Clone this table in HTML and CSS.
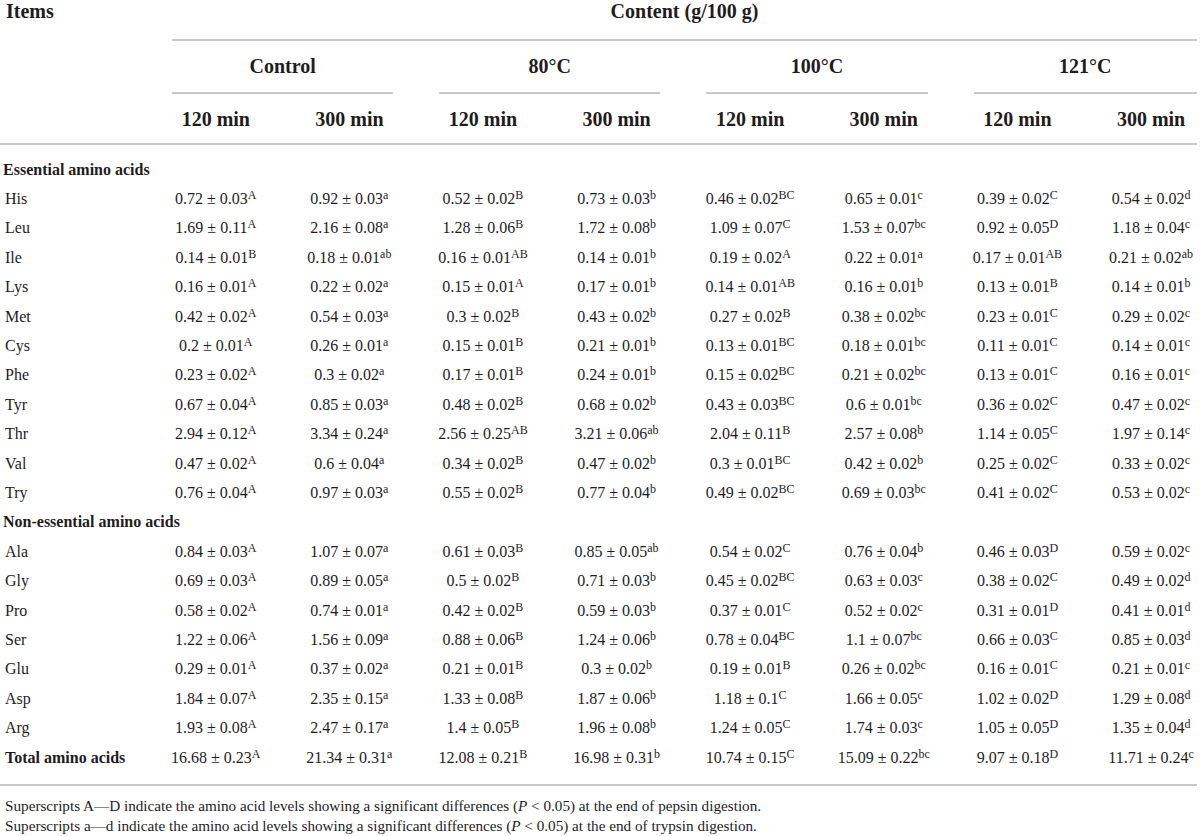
FILE: index.html
```html
<!DOCTYPE html>
<html lang="en">
<head>
<meta charset="utf-8">
<title>Amino acid content</title>
<link rel="stylesheet" href="styles.css">
</head>
<body>
<table class="tbl">
  <colgroup>
    <col class="c-items">
    <col class="c-data"><col class="c-data"><col class="c-data"><col class="c-data">
    <col class="c-data"><col class="c-data"><col class="c-data"><col class="c-last">
  </colgroup>
  <thead>
    <tr>
      <th class="h-items" rowspan="3">Items</th>
      <th class="h-content" colspan="8"><div class="h-content-in">Content (g/100 g)</div></th>
    </tr>
    <tr>
      <th class="h-grp" colspan="2"><div class="grp-in">Control</div></th>
      <th class="h-grp" colspan="2"><div class="grp-in">80°C</div></th>
      <th class="h-grp" colspan="2"><div class="grp-in">100°C</div></th>
      <th class="h-grp" colspan="2"><div class="grp-in grp-last">121°C</div></th>
    </tr>
    <tr class="h-sub">
      <th>120 min</th><th>300 min</th>
      <th>120 min</th><th>300 min</th>
      <th>120 min</th><th>300 min</th>
      <th>120 min</th><th class="last">300 min</th>
    </tr>
  </thead>
  <tbody>
    <tr class="sec first"><td colspan="9">Essential amino acids</td></tr>
    <tr><td class="lbl">His</td><td>0.72 ± 0.03<sup>A</sup></td><td>0.92 ± 0.03<sup>a</sup></td><td>0.52 ± 0.02<sup>B</sup></td><td>0.73 ± 0.03<sup>b</sup></td><td>0.46 ± 0.02<sup>BC</sup></td><td>0.65 ± 0.01<sup>c</sup></td><td>0.39 ± 0.02<sup>C</sup></td><td class="last">0.54 ± 0.02<sup>d</sup></td></tr>
    <tr><td class="lbl">Leu</td><td>1.69 ± 0.11<sup>A</sup></td><td>2.16 ± 0.08<sup>a</sup></td><td>1.28 ± 0.06<sup>B</sup></td><td>1.72 ± 0.08<sup>b</sup></td><td>1.09 ± 0.07<sup>C</sup></td><td>1.53 ± 0.07<sup>bc</sup></td><td>0.92 ± 0.05<sup>D</sup></td><td class="last">1.18 ± 0.04<sup>c</sup></td></tr>
    <tr><td class="lbl">Ile</td><td>0.14 ± 0.01<sup>B</sup></td><td>0.18 ± 0.01<sup>ab</sup></td><td>0.16 ± 0.01<sup>AB</sup></td><td>0.14 ± 0.01<sup>b</sup></td><td>0.19 ± 0.02<sup>A</sup></td><td>0.22 ± 0.01<sup>a</sup></td><td>0.17 ± 0.01<sup>AB</sup></td><td class="last">0.21 ± 0.02<sup>ab</sup></td></tr>
    <tr><td class="lbl">Lys</td><td>0.16 ± 0.01<sup>A</sup></td><td>0.22 ± 0.02<sup>a</sup></td><td>0.15 ± 0.01<sup>A</sup></td><td>0.17 ± 0.01<sup>b</sup></td><td>0.14 ± 0.01<sup>AB</sup></td><td>0.16 ± 0.01<sup>b</sup></td><td>0.13 ± 0.01<sup>B</sup></td><td class="last">0.14 ± 0.01<sup>b</sup></td></tr>
    <tr><td class="lbl">Met</td><td>0.42 ± 0.02<sup>A</sup></td><td>0.54 ± 0.03<sup>a</sup></td><td>0.3 ± 0.02<sup>B</sup></td><td>0.43 ± 0.02<sup>b</sup></td><td>0.27 ± 0.02<sup>B</sup></td><td>0.38 ± 0.02<sup>bc</sup></td><td>0.23 ± 0.01<sup>C</sup></td><td class="last">0.29 ± 0.02<sup>c</sup></td></tr>
    <tr><td class="lbl">Cys</td><td>0.2 ± 0.01<sup>A</sup></td><td>0.26 ± 0.01<sup>a</sup></td><td>0.15 ± 0.01<sup>B</sup></td><td>0.21 ± 0.01<sup>b</sup></td><td>0.13 ± 0.01<sup>BC</sup></td><td>0.18 ± 0.01<sup>bc</sup></td><td>0.11 ± 0.01<sup>C</sup></td><td class="last">0.14 ± 0.01<sup>c</sup></td></tr>
    <tr><td class="lbl">Phe</td><td>0.23 ± 0.02<sup>A</sup></td><td>0.3 ± 0.02<sup>a</sup></td><td>0.17 ± 0.01<sup>B</sup></td><td>0.24 ± 0.01<sup>b</sup></td><td>0.15 ± 0.02<sup>BC</sup></td><td>0.21 ± 0.02<sup>bc</sup></td><td>0.13 ± 0.01<sup>C</sup></td><td class="last">0.16 ± 0.01<sup>c</sup></td></tr>
    <tr><td class="lbl">Tyr</td><td>0.67 ± 0.04<sup>A</sup></td><td>0.85 ± 0.03<sup>a</sup></td><td>0.48 ± 0.02<sup>B</sup></td><td>0.68 ± 0.02<sup>b</sup></td><td>0.43 ± 0.03<sup>BC</sup></td><td>0.6 ± 0.01<sup>bc</sup></td><td>0.36 ± 0.02<sup>C</sup></td><td class="last">0.47 ± 0.02<sup>c</sup></td></tr>
    <tr><td class="lbl">Thr</td><td>2.94 ± 0.12<sup>A</sup></td><td>3.34 ± 0.24<sup>a</sup></td><td>2.56 ± 0.25<sup>AB</sup></td><td>3.21 ± 0.06<sup>ab</sup></td><td>2.04 ± 0.11<sup>B</sup></td><td>2.57 ± 0.08<sup>b</sup></td><td>1.14 ± 0.05<sup>C</sup></td><td class="last">1.97 ± 0.14<sup>c</sup></td></tr>
    <tr><td class="lbl">Val</td><td>0.47 ± 0.02<sup>A</sup></td><td>0.6 ± 0.04<sup>a</sup></td><td>0.34 ± 0.02<sup>B</sup></td><td>0.47 ± 0.02<sup>b</sup></td><td>0.3 ± 0.01<sup>BC</sup></td><td>0.42 ± 0.02<sup>b</sup></td><td>0.25 ± 0.02<sup>C</sup></td><td class="last">0.33 ± 0.02<sup>c</sup></td></tr>
    <tr><td class="lbl">Try</td><td>0.76 ± 0.04<sup>A</sup></td><td>0.97 ± 0.03<sup>a</sup></td><td>0.55 ± 0.02<sup>B</sup></td><td>0.77 ± 0.04<sup>b</sup></td><td>0.49 ± 0.02<sup>BC</sup></td><td>0.69 ± 0.03<sup>bc</sup></td><td>0.41 ± 0.02<sup>C</sup></td><td class="last">0.53 ± 0.02<sup>c</sup></td></tr>
    <tr class="sec"><td colspan="9">Non-essential amino acids</td></tr>
    <tr><td class="lbl">Ala</td><td>0.84 ± 0.03<sup>A</sup></td><td>1.07 ± 0.07<sup>a</sup></td><td>0.61 ± 0.03<sup>B</sup></td><td>0.85 ± 0.05<sup>ab</sup></td><td>0.54 ± 0.02<sup>C</sup></td><td>0.76 ± 0.04<sup>b</sup></td><td>0.46 ± 0.03<sup>D</sup></td><td class="last">0.59 ± 0.02<sup>c</sup></td></tr>
    <tr><td class="lbl">Gly</td><td>0.69 ± 0.03<sup>A</sup></td><td>0.89 ± 0.05<sup>a</sup></td><td>0.5 ± 0.02<sup>B</sup></td><td>0.71 ± 0.03<sup>b</sup></td><td>0.45 ± 0.02<sup>BC</sup></td><td>0.63 ± 0.03<sup>c</sup></td><td>0.38 ± 0.02<sup>C</sup></td><td class="last">0.49 ± 0.02<sup>d</sup></td></tr>
    <tr><td class="lbl">Pro</td><td>0.58 ± 0.02<sup>A</sup></td><td>0.74 ± 0.01<sup>a</sup></td><td>0.42 ± 0.02<sup>B</sup></td><td>0.59 ± 0.03<sup>b</sup></td><td>0.37 ± 0.01<sup>C</sup></td><td>0.52 ± 0.02<sup>c</sup></td><td>0.31 ± 0.01<sup>D</sup></td><td class="last">0.41 ± 0.01<sup>d</sup></td></tr>
    <tr><td class="lbl">Ser</td><td>1.22 ± 0.06<sup>A</sup></td><td>1.56 ± 0.09<sup>a</sup></td><td>0.88 ± 0.06<sup>B</sup></td><td>1.24 ± 0.06<sup>b</sup></td><td>0.78 ± 0.04<sup>BC</sup></td><td>1.1 ± 0.07<sup>bc</sup></td><td>0.66 ± 0.03<sup>C</sup></td><td class="last">0.85 ± 0.03<sup>d</sup></td></tr>
    <tr><td class="lbl">Glu</td><td>0.29 ± 0.01<sup>A</sup></td><td>0.37 ± 0.02<sup>a</sup></td><td>0.21 ± 0.01<sup>B</sup></td><td>0.3 ± 0.02<sup>b</sup></td><td>0.19 ± 0.01<sup>B</sup></td><td>0.26 ± 0.02<sup>bc</sup></td><td>0.16 ± 0.01<sup>C</sup></td><td class="last">0.21 ± 0.01<sup>c</sup></td></tr>
    <tr><td class="lbl">Asp</td><td>1.84 ± 0.07<sup>A</sup></td><td>2.35 ± 0.15<sup>a</sup></td><td>1.33 ± 0.08<sup>B</sup></td><td>1.87 ± 0.06<sup>b</sup></td><td>1.18 ± 0.1<sup>C</sup></td><td>1.66 ± 0.05<sup>c</sup></td><td>1.02 ± 0.02<sup>D</sup></td><td class="last">1.29 ± 0.08<sup>d</sup></td></tr>
    <tr><td class="lbl">Arg</td><td>1.93 ± 0.08<sup>A</sup></td><td>2.47 ± 0.17<sup>a</sup></td><td>1.4 ± 0.05<sup>B</sup></td><td>1.96 ± 0.08<sup>b</sup></td><td>1.24 ± 0.05<sup>C</sup></td><td>1.74 ± 0.03<sup>c</sup></td><td>1.05 ± 0.05<sup>D</sup></td><td class="last">1.35 ± 0.04<sup>d</sup></td></tr>
    <tr class="total"><td class="lbl">Total amino acids</td><td>16.68 ± 0.23<sup>A</sup></td><td>21.34 ± 0.31<sup>a</sup></td><td>12.08 ± 0.21<sup>B</sup></td><td>16.98 ± 0.31<sup>b</sup></td><td>10.74 ± 0.15<sup>C</sup></td><td>15.09 ± 0.22<sup>bc</sup></td><td>9.07 ± 0.18<sup>D</sup></td><td class="last">11.71 ± 0.24<sup>c</sup></td></tr>
  </tbody>
</table>
<div class="notes">
  <p>Superscripts A—D indicate the amino acid levels showing a significant differences (<i>P</i> &lt; 0.05) at the end of pepsin digestion.</p>
  <p>Superscripts a—d indicate the amino acid levels showing a significant differences (<i>P</i> &lt; 0.05) at the end of trypsin digestion.</p>
</div>
</body>
</html>
```
FILE: styles.css
```css
html, body {
  margin: 0;
  padding: 0;
  background: #ffffff;
}
body {
  font-family: "Liberation Serif", "Times New Roman", serif;
  color: #1f1c1d;
}
.tbl {
  border-collapse: collapse;
  table-layout: fixed;
  width: 1197px;
}
.c-items { width: 149px; }
.c-data { width: 133.6px; }
.c-last { width: 112.8px; }

th {
  font-weight: bold;
  font-size: 20px;
  line-height: 22px;
  padding: 0;
  text-align: center;
}
.h-items {
  text-align: left;
  vertical-align: top;
  padding-left: 6px;
  border-bottom: 2px solid #c9c9c9;
}
.h-content-in {
  margin-left: 23px;
  padding-bottom: 17px;
  border-bottom: 2px solid #c9c9c9;
}
.grp-in {
  margin: 0 23px;
  padding: 14px 0 15px;
  border-bottom: 2px solid #c9c9c9;
}
.grp-in.grp-last {
  margin-right: 0;
}
.h-sub th {
  padding: 14px 0 13px;
  border-bottom: 2px solid #c9c9c9;
}
.h-sub th.last {
  padding-left: 21px;
}

td {
  font-size: 16px;
  line-height: 29.4px;
  padding: 0;
  text-align: center;
  white-space: nowrap;
}
td.last {
  padding-left: 21px;
}
td.lbl {
  text-align: left;
  padding-left: 5px;
}
tr.sec td {
  font-weight: bold;
  text-align: left;
  padding-left: 3px;
}
tr.first td {
  padding-top: 9.5px;
}
tr.total td {
  padding-bottom: 12px;
  border-bottom: 2px solid #c9c9c9;
}
tr.total td.lbl {
  font-weight: bold;
}
sup {
  font-size: 12px;
  line-height: 0;
  vertical-align: 5px;
}
.notes {
  padding-left: 5px;
  margin-top: 10px;
  font-size: 15.2px;
  line-height: 19.5px;
}
.notes p {
  margin: 0;
}
```
